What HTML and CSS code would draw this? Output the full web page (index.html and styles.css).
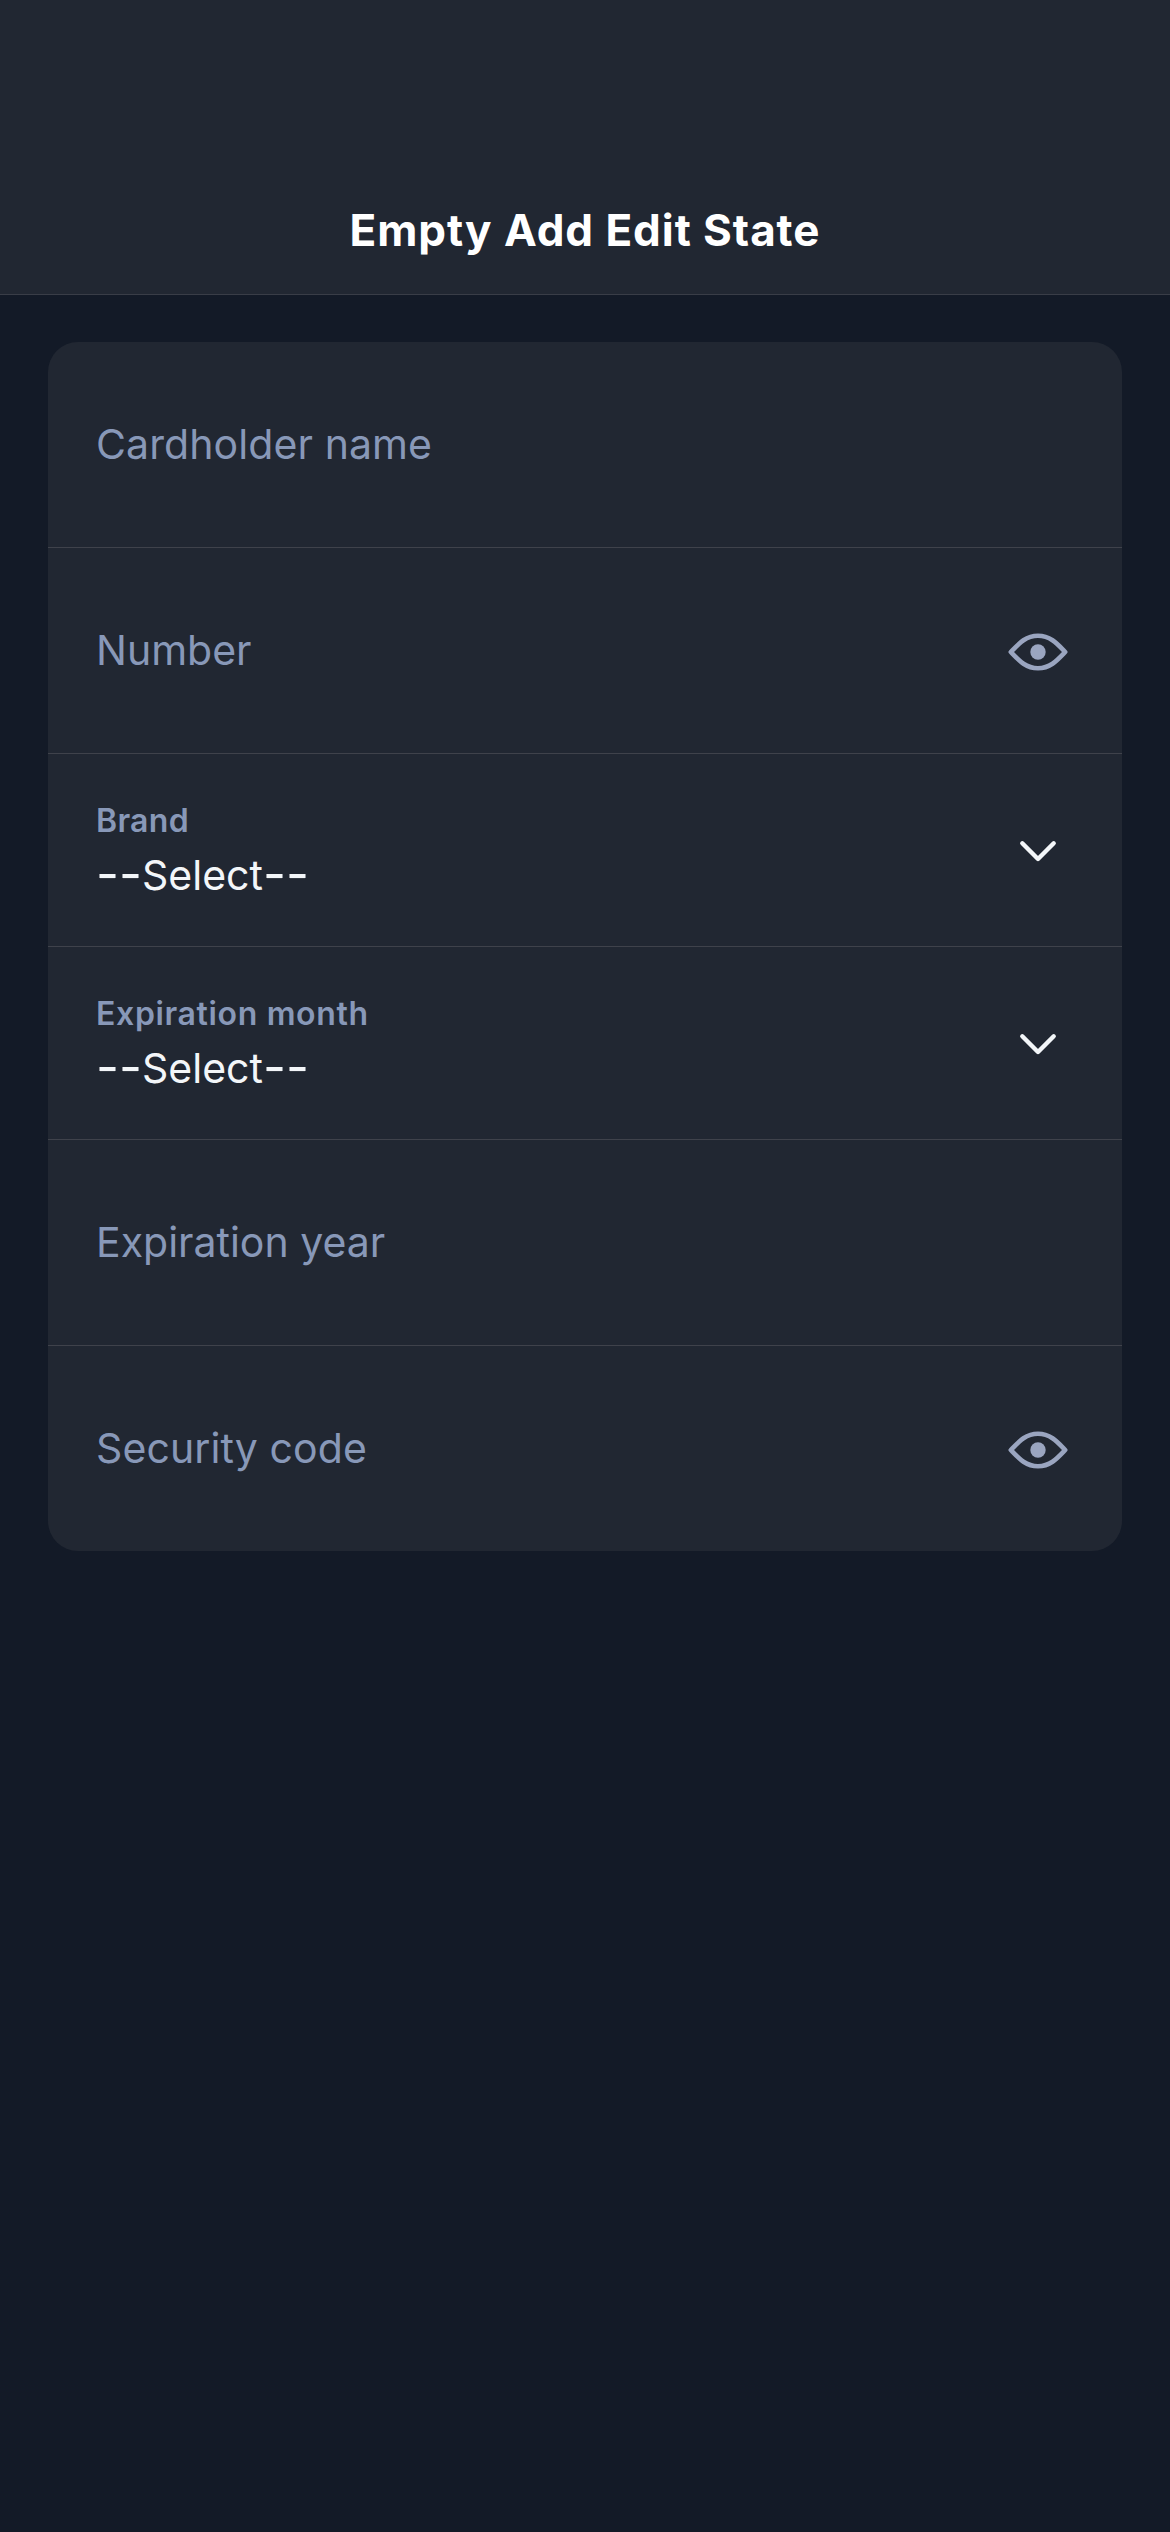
FILE: index.html
```html
<!DOCTYPE html>
<html lang="en">
<head>
<meta charset="utf-8">
<title>Empty Add Edit State</title>
<link rel="stylesheet" href="styles.css">
</head>
<body>
<header class="header"><h1 class="title">Empty Add Edit State</h1></header>
<main class="content">
  <section class="card">
    <div class="row"><span class="placeholder cardholder">Cardholder name</span></div>
    <div class="row">
      <span class="placeholder number">Number</span>
      <svg class="icon eye" viewBox="0 0 60 60"><path d="M2.8 31C10.5 23 17.5 14.7 30 14.7S49.500 23 57.200 31C49.500 39 42.500 47.300 30 47.300S10.500 39 2.800 31Z"/><circle cx="30" cy="31" r="7.7"/></svg>
    </div>
    <div class="row select">
      <div class="field"><span class="label brand">Brand</span><span class="value"><span class="dash">--</span>Select<span class="dash">--</span></span></div>
      <svg class="icon chevron" viewBox="0 0 60 60"><path d="M14.300 23.300L30 39L45.700 23.300"/></svg>
    </div>
    <div class="row select">
      <div class="field"><span class="label month">Expiration month</span><span class="value"><span class="dash">--</span>Select<span class="dash">--</span></span></div>
      <svg class="icon chevron" viewBox="0 0 60 60"><path d="M14.300 23.300L30 39L45.700 23.300"/></svg>
    </div>
    <div class="row"><span class="placeholder year">Expiration year</span></div>
    <div class="row">
      <span class="placeholder security">Security code</span>
      <svg class="icon eye" viewBox="0 0 60 60"><path d="M2.8 31C10.5 23 17.5 14.7 30 14.7S49.500 23 57.200 31C49.500 39 42.500 47.300 30 47.300S10.500 39 2.800 31Z"/><circle cx="30" cy="31" r="7.7"/></svg>
    </div>
  </section>
</main>
</body>
</html>
```
FILE: styles.css
```css
* { box-sizing: border-box; }
body {
  margin: 0;
  min-height: 2532px;
  background: #131a27;
  font-family: Inter, "Open Sans", sans-serif;
}
.header {
  height: 295px;
  padding-top: 200px;
  background: #212732;
  border-bottom: 1px solid #393d47;
  text-align: center;
}
.title {
  margin: 0;
  font-size: 44px;
  font-weight: 700;
  line-height: 60px;
  letter-spacing: 0.95px;
  color: #fff;
}
.content { padding: 47px 48px; }
.card {
  border-radius: 30px;
  background: #212732;
  overflow: hidden;
}
.row {
  display: flex;
  align-items: center;
  justify-content: space-between;
  height: 206px;
  padding: 0 54px 0 48px;
  border-bottom: 1px solid #3f424b;
}
.row.select { height: 193px; }
.row:last-child { height: 205px; border-bottom: 0; }
.placeholder {
  padding-bottom: 2px;
  font-size: 41px;
  line-height: 56px;
  color: #8898b8;
  white-space: nowrap;
}
.cardholder, .security { letter-spacing: 0.1px; }
.field { display: flex; flex-direction: column; padding-top: 3px; }
.label {
  font-size: 32px;
  font-weight: 600;
  line-height: 46px;
  color: #8898b8;
}
.brand { letter-spacing: 0.3px; }
.month { letter-spacing: 0.65px; }
.value {
  font-size: 41px;
  line-height: 62px;
  color: #f3f6f9;
}
.dash { position: relative; top: 2px; font-size: 50px; line-height: 1; }
.icon { width: 60px; height: 60px; fill: none; }
.eye path { stroke: #9aa5c0; stroke-width: 4.6; stroke-linejoin: round; }
.eye circle { fill: #9aa5c0; }
.chevron path {
  stroke: #f3f6f9;
  stroke-width: 4.4;
  stroke-linecap: round;
  stroke-linejoin: round;
}
```
